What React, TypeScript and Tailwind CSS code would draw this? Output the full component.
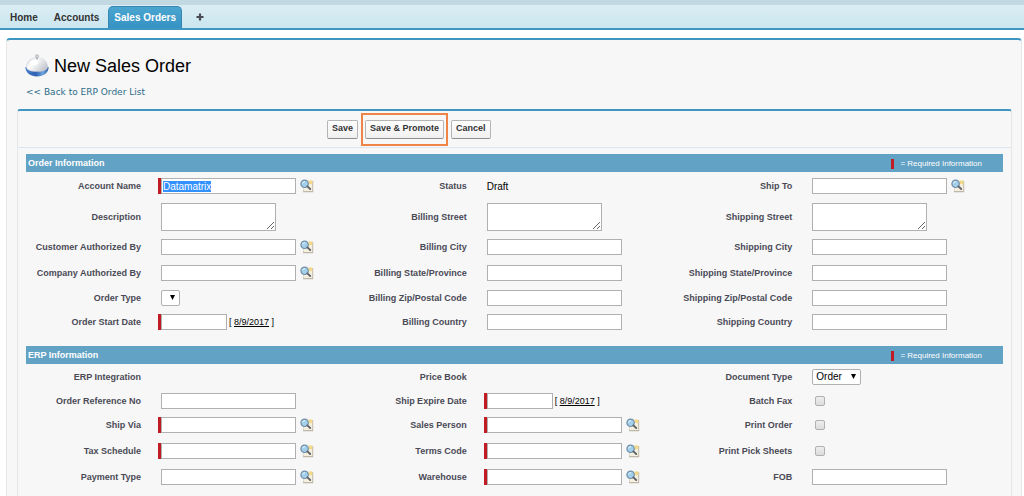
import React, { useEffect, useRef } from 'react';
import { clsx } from 'clsx';

type FieldKind = 'text' | 'lookup' | 'date' | 'textarea' | 'select' | 'checkbox' | 'readonly';

interface Field {
    label: string;
    kind: FieldKind;
    required?: boolean;
    value?: string;
    selected?: boolean;
}

interface Row {
    height: string;
    fields: Field[];
}

const orderRows: Row[] = [
    {
        height: 'h-7',
        fields: [
            { label: 'Account Name', kind: 'lookup', required: true, value: 'Datamatrix', selected: true },
            { label: 'Status', kind: 'readonly', value: 'Draft' },
            { label: 'Ship To', kind: 'lookup' },
        ],
    },
    {
        height: 'h-[34px]',
        fields: [
            { label: 'Description', kind: 'textarea' },
            { label: 'Billing Street', kind: 'textarea' },
            { label: 'Shipping Street', kind: 'textarea' },
        ],
    },
    {
        height: 'h-[26px]',
        fields: [
            { label: 'Customer Authorized By', kind: 'lookup' },
            { label: 'Billing City', kind: 'text' },
            { label: 'Shipping City', kind: 'text' },
        ],
    },
    {
        height: 'h-[26px]',
        fields: [
            { label: 'Company Authorized By', kind: 'lookup' },
            { label: 'Billing State/Province', kind: 'text' },
            { label: 'Shipping State/Province', kind: 'text' },
        ],
    },
    {
        height: 'h-6',
        fields: [
            { label: 'Order Type', kind: 'select' },
            { label: 'Billing Zip/Postal Code', kind: 'text' },
            { label: 'Shipping Zip/Postal Code', kind: 'text' },
        ],
    },
    {
        height: 'h-6',
        fields: [
            { label: 'Order Start Date', kind: 'date', required: true },
            { label: 'Billing Country', kind: 'text' },
            { label: 'Shipping Country', kind: 'text' },
        ],
    },
];

const erpRows: Row[] = [
    {
        height: 'h-[26px]',
        fields: [
            { label: 'ERP Integration', kind: 'readonly' },
            { label: 'Price Book', kind: 'readonly' },
            { label: 'Document Type', kind: 'select', value: 'Order' },
        ],
    },
    {
        height: 'h-[22px]',
        fields: [
            { label: 'Order Reference No', kind: 'text' },
            { label: 'Ship Expire Date', kind: 'date', required: true },
            { label: 'Batch Fax', kind: 'checkbox' },
        ],
    },
    {
        height: 'h-[26px]',
        fields: [
            { label: 'Ship Via', kind: 'lookup', required: true },
            { label: 'Sales Person', kind: 'lookup', required: true },
            { label: 'Print Order', kind: 'checkbox' },
        ],
    },
    {
        height: 'h-[26px]',
        fields: [
            { label: 'Tax Schedule', kind: 'lookup', required: true },
            { label: 'Terms Code', kind: 'lookup', required: true },
            { label: 'Print Pick Sheets', kind: 'checkbox' },
        ],
    },
    {
        height: 'h-[26px]',
        fields: [
            { label: 'Payment Type', kind: 'lookup' },
            { label: 'Warehouse', kind: 'lookup', required: true },
            { label: 'FOB', kind: 'text' },
        ],
    },
];

const boxStyle = 'border border-[#b0b0b0] bg-white text-[10px] text-black outline-none selection:bg-[#3390ff] selection:text-white';

function LookupIcon() {
    return (
        <svg width="14" height="14" viewBox="0 0 14 14">
            <path d="M4 2h9.2v11.2H3z" fill="#b9b2a4" />
            <path d="M3.5 1.5h8.8v10.6H3.5z" fill="#f5efe0" />
            <path d="M8.5 1.5h3.8v3.6H8.5z" fill="#f3d98a" />
            <circle cx="4.6" cy="4.8" r="3.7" fill="#a4cfea" stroke="#6f8ea8" strokeWidth="1.2" />
            <path d="M2.7 4.3a2.2 2.2 0 0 1 2.3-1.7" fill="none" stroke="#e8f6ff" strokeWidth="1" />
            <path d="M7.4 7.4l2.8 2.6" stroke="#5f6368" strokeWidth="1.9" strokeLinecap="round" />
        </svg>
    );
}

function BellIcon() {
    return (
        <svg width="24" height="24" viewBox="0 0 24 24">
            <defs>
                <linearGradient id="dome" x1="0" x2="1" y1="0" y2="0.6">
                    <stop offset="0" stopColor="#cfd2d9" />
                    <stop offset="0.4" stopColor="#ffffff" />
                    <stop offset="1" stopColor="#c3c6cd" />
                </linearGradient>
                <linearGradient id="base" x1="0" x2="1" y1="0" y2="0">
                    <stop offset="0" stopColor="#4a80c8" />
                    <stop offset="0.45" stopColor="#2f62b3" />
                    <stop offset="0.75" stopColor="#6fa5de" />
                    <stop offset="1" stopColor="#2c5aa5" />
                </linearGradient>
            </defs>
            <path d="M.4 13c0 6 5 9.4 11.6 9.4S23.6 19 23.6 13z" fill="url(#base)" />
            <path d="M1.4 12.4C2 7.2 6 3.8 12 3.8s10 3.4 10.6 8.6c.3 3.4-4.4 5.2-10.6 5.2S1.1 15.800 1.400 12.400z" fill="url(#dome)" stroke="#c6c9d0" strokeWidth=".5" />
            <ellipse cx="9" cy="8.500" rx="4" ry="2.600" fill="#fff" opacity=".8" />
            <path d="M11 2.800h2v2.800h-2z" fill="#b4b6bb" />
            <circle cx="12" cy="2.200" r="1.600" fill="#d5d6da" stroke="#a9abb0" strokeWidth=".6" />
        </svg>
    );
}

function RequiredMark() {
    return <span className="h-4 w-[3px] shrink-0 bg-[#c11b23]" />;
}

function FieldControl({ field, id }: { field: Field; id: string }) {
    const inputRef = useRef<HTMLInputElement>(null);

    useEffect(() => {
        if (field.selected) {
            inputRef.current?.focus();
            inputRef.current?.select();
        }
    }, [field.selected]);

    switch (field.kind) {
        case 'readonly':
            return <output id={id} className="text-[10px] text-black">{field.value}</output>;
        case 'textarea':
            return <textarea id={id} className={clsx(boxStyle, 'block h-7 w-[115px]')} />;
        case 'checkbox':
            return (
                <input
                    id={id}
                    type="checkbox"
                    className="ml-[3px] h-[10px] w-[10px] appearance-none rounded-[2px] border border-[#b0b0b0] bg-linear-to-b from-[#eeeeee] to-[#dcdcdc]"
                />
            );
        case 'select':
            return (
                <div className="relative">
                    <select
                        id={id}
                        defaultValue={field.value ?? ''}
                        className={clsx(boxStyle, 'block h-4 appearance-none rounded-[2px] pl-[3px] leading-[14px]', field.value ? 'w-[49px]' : 'w-[19px]')}
                    >
                        <option>{field.value ?? ''}</option>
                    </select>
                    <svg className="pointer-events-none absolute top-[5px] right-[5px]" width="5" height="5" viewBox="0 0 5 5">
                        <path d="M0 0h5L2.5 5z" fill="#000" />
                    </svg>
                </div>
            );
        case 'date':
            return (
                <div className="flex items-center gap-[2px] text-[9px] text-black">
                    <input id={id} type="text" className={clsx(boxStyle, 'h-4 w-[66px] px-[2px]')} />
                    <span className="pt-[2px]">
                        [ <a href="#" className="underline">8/9/2017</a> ]
                    </span>
                </div>
            );
        default:
            return (
                <div className="flex items-center gap-1">
                    <input
                        id={id}
                        ref={inputRef}
                        type="text"
                        defaultValue={field.value}
                        className={clsx(boxStyle, 'h-4 w-[135px] px-px')}
                    />
                    {field.kind === 'lookup' && (
                        <button type="button" aria-label={`${field.label} Lookup`}>
                            <LookupIcon />
                        </button>
                    )}
                </div>
            );
    }
}

function Section({ title, rows }: { title: string; rows: Row[] }) {
    return (
        <section>
            <div className="flex h-[18px] items-center justify-between bg-[#62a2c4] pt-px pr-[21px] pl-[2px] text-white">
                <h2 className="text-[9px] font-bold">{title}</h2>
                <div className="flex items-center gap-[6px] text-[8px]">
                    <span className="h-[10px] w-[3px] bg-[#c11b23]" />
                    <span>= Required Information</span>
                </div>
            </div>
            {rows.map((row) => (
                <div key={row.fields[0].label} className={clsx('grid grid-cols-3', row.height)}>
                    {row.fields.map((field) => {
                        const id = field.label.toLowerCase().replace(/[^a-z]+/g, '-');
                        return (
                            <div key={id} className="flex items-center">
                                <label htmlFor={id} className="w-[115px] pt-[2px] text-right text-[9px] font-bold whitespace-nowrap text-[#4a4a56]">
                                    {field.label}
                                </label>
                                <div className="flex w-5 justify-end">{field.required && <RequiredMark />}</div>
                                <FieldControl field={field} id={id} />
                            </div>
                        );
                    })}
                </div>
            ))}
        </section>
    );
}

function ActionButton({ children }: { children: React.ReactNode }) {
    return (
        <button
            type="button"
            className="h-[19px] rounded-[2px] border border-[#b5b5b5] border-b-[#8f8f8f] bg-linear-to-b from-white to-[#f0f0f0] px-1 text-[9px] font-bold text-[#333333]"
        >
            {children}
        </button>
    );
}

export default function App() {
    return (
        <div className="flex min-h-screen flex-col bg-white font-['Liberation_Sans',Arial,sans-serif]">
            {/* Tab bar */}
            <header className="border-b-2 border-[#3f96c0] bg-linear-to-b from-[#deeff5] to-[#cbe6ef]">
                <div className="h-[5px] bg-[#c3d9e2]" />
                <nav className="flex h-[23px] items-end text-[10px] font-bold text-[#333333]">
                    <a href="#" className="px-[10px] pb-[3px]">Home</a>
                    <a href="#" className="px-[6px] pb-[3px]">Accounts</a>
                    <a href="#" className="ml-[3px] flex h-[22px] items-center rounded-t-[5px] border border-b-0 border-[#3787b3] bg-linear-to-b from-[#4ba5cf] to-[#3592c4] px-[5px] text-white">
                        Sales Orders
                    </a>
                    <a href="#" aria-label="All Tabs" className="ml-[14px] pb-[7px]">
                        <svg width="8" height="8" viewBox="0 0 8 8">
                            <path d="M4 0.5v7M0.5 4h7" stroke="#4b4b55" strokeWidth="2.2" />
                        </svg>
                    </a>
                </nav>
            </header>

            <main className="mt-2 mr-[2px] ml-[6px] flex flex-1 flex-col rounded-t-[4px] border-x border-t-2 border-x-[#e6e6e6] border-t-[#3f96c0] bg-[#f7f7f7] pr-[9px] pl-[10px]">
                <div className="mt-3 flex h-7 items-center gap-[5px] pl-2">
                    <BellIcon />
                    <h1 className="text-[18px] text-black">New Sales Order</h1>
                </div>
                <a href="#" className="mt-1 mb-[9px] self-start pl-[9px] font-['DejaVu_Sans',Verdana,sans-serif] text-[9px] leading-4 text-[#2b6b8a]">
                    &lt;&lt; Back to ERP Order List
                </a>

                <form className="flex flex-1 flex-col rounded-t-[3px] border-x border-t-2 border-x-[#e6e6e6] border-t-[#3f96c0]">
                    <div className="flex h-[37px] items-center border-b border-[#dbe7f0] pl-[309px]">
                        <ActionButton>Save</ActionButton>
                        <div className="mx-[3px] flex h-[33px] items-center border-2 border-[#ee8447] px-[2px]">
                            <ActionButton>Save &amp; Promote</ActionButton>
                        </div>
                        <ActionButton>Cancel</ActionButton>
                    </div>
                    <div className="flex flex-col gap-3 px-2 pt-[6px]">
                        <Section title="Order Information" rows={orderRows} />
                        <Section title="ERP Information" rows={erpRows} />
                    </div>
                </form>
            </main>
        </div>
    );
}
